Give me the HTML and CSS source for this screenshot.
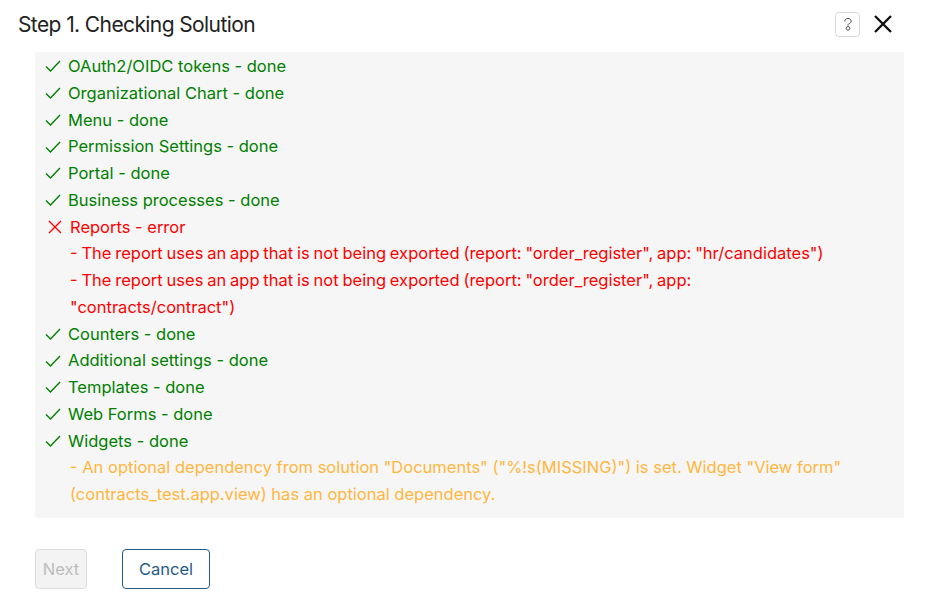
FILE: index.html
```html
<!DOCTYPE html>
<html>
<head>
<meta charset="utf-8">
<link rel="stylesheet" href="styles.css">
</head>
<body>
<div class="dialog">
  <div class="header">
    <h1 class="title">Step 1. Checking Solution</h1>
    <div class="actions">
      <span class="help">
        <svg width="10" height="15" viewBox="0 0 10 15"><path d="M1.8 4.4C1.8 2.5 3.2 1.4 5 1.4s3.2 1.1 3.2 2.8c0 1.5-1.1 2.1-2.1 2.5-0.9 0.3-1.1 0.9-1.1 1.6v0.5" fill="none" stroke="#555" stroke-width="1"/><circle cx="5" cy="11.4" r="1.8" fill="none" stroke="#555" stroke-width="1"/></svg>
      </span>
      <svg class="close" width="20" height="20" viewBox="0 0 20 20"><path d="M2 2L18 18M18 2L2 18" stroke="#111" stroke-width="2.4"/></svg>
    </div>
  </div>
  <div class="panel">
    <div class="row ok"><svg class="ico" width="16" height="14" viewBox="0 0 16 14"><path d="M1 7.5L5.5 12L15 2" fill="none" stroke="#008000" stroke-width="1.4"/></svg>OAuth2/OIDC tokens - done</div>
    <div class="row ok"><svg class="ico" width="16" height="14" viewBox="0 0 16 14"><path d="M1 7.5L5.5 12L15 2" fill="none" stroke="#008000" stroke-width="1.4"/></svg>Organizational Chart - done</div>
    <div class="row ok"><svg class="ico" width="16" height="14" viewBox="0 0 16 14"><path d="M1 7.5L5.5 12L15 2" fill="none" stroke="#008000" stroke-width="1.4"/></svg>Menu - done</div>
    <div class="row ok"><svg class="ico" width="16" height="14" viewBox="0 0 16 14"><path d="M1 7.5L5.5 12L15 2" fill="none" stroke="#008000" stroke-width="1.4"/></svg>Permission Settings - done</div>
    <div class="row ok"><svg class="ico" width="16" height="14" viewBox="0 0 16 14"><path d="M1 7.5L5.5 12L15 2" fill="none" stroke="#008000" stroke-width="1.4"/></svg>Portal - done</div>
    <div class="row ok"><svg class="ico" width="16" height="14" viewBox="0 0 16 14"><path d="M1 7.5L5.5 12L15 2" fill="none" stroke="#008000" stroke-width="1.4"/></svg>Business processes - done</div>
    <div class="row err"><svg class="ico ico-x" width="18" height="14" viewBox="0 0 18 14"><path d="M2 1L14 13M14 1L2 13" fill="none" stroke="#ff0000" stroke-width="1.4"/></svg>Reports - error</div>
    <div class="sub err">- The report uses an app that is not being exported (report: "order_register", app: "hr/candidates")</div>
    <div class="sub err">- The report uses an app that is not being exported (report: "order_register", app: "contracts/contract")</div>
    <div class="row ok"><svg class="ico" width="16" height="14" viewBox="0 0 16 14"><path d="M1 7.5L5.5 12L15 2" fill="none" stroke="#008000" stroke-width="1.4"/></svg>Counters - done</div>
    <div class="row ok"><svg class="ico" width="16" height="14" viewBox="0 0 16 14"><path d="M1 7.5L5.5 12L15 2" fill="none" stroke="#008000" stroke-width="1.4"/></svg>Additional settings - done</div>
    <div class="row ok"><svg class="ico" width="16" height="14" viewBox="0 0 16 14"><path d="M1 7.5L5.5 12L15 2" fill="none" stroke="#008000" stroke-width="1.4"/></svg>Templates - done</div>
    <div class="row ok"><svg class="ico" width="16" height="14" viewBox="0 0 16 14"><path d="M1 7.5L5.5 12L15 2" fill="none" stroke="#008000" stroke-width="1.4"/></svg>Web Forms - done</div>
    <div class="row ok"><svg class="ico" width="16" height="14" viewBox="0 0 16 14"><path d="M1 7.5L5.5 12L15 2" fill="none" stroke="#008000" stroke-width="1.4"/></svg>Widgets - done</div>
    <div class="sub warn">- An optional dependency from solution "Documents" ("%!s(MISSING)") is set. Widget "View form" (contracts_test.app.view) has an optional dependency.</div>
  </div>
  <div class="footer">
    <button class="btn btn-disabled" disabled>Next</button>
    <button class="btn btn-outline">Cancel</button>
  </div>
</div>
</body>
</html>
```

FILE: styles.css
```css
* { box-sizing: border-box; }
html, body { margin: 0; padding: 0; background: #fff; }
body { font-family: Inter, "Noto Sans", sans-serif; width: 925px; height: 593px; overflow: hidden; }
.dialog { padding: 0 21px 0 0; }
.header {
  display: flex;
  align-items: center;
  justify-content: space-between;
  height: 52px;
  padding: 0 11px 4px 18px;
}
.title {
  margin: 0;
  font-size: 21px;
  font-weight: 400;
  color: #222;
  letter-spacing: -0.6px;
}
.actions { display: flex; align-items: center; gap: 13px; }
.help {
  width: 25px; height: 25px;
  border: 1px solid #d8d8d8;
  border-radius: 4px;
  display: flex; align-items: center; justify-content: center;
}
.close { display: block; }
.panel {
  margin-left: 35px;
  background: #f6f6f6;
  padding: 1px 52px 10px 10px;
  font-size: 16.5px;
  line-height: 26.75px;
}
.row { display: flex; align-items: center; }
.ico { margin-right: 7px; flex: none; }
.ico-x { margin-left: 2px; margin-right: 5px; }
.sub { padding-left: 25px; }
.sub.err { word-spacing: -0.8px; }
.ok { color: #008000; }
.err { color: #ff0000; }
.warn { color: #ffb640; }
.footer {
  display: flex;
  gap: 35px;
  padding: 31px 0 0 35px;
}
.btn {
  font-family: Inter, "Noto Sans", sans-serif;
  font-size: 16.5px;
  height: 40px;
  border-radius: 4px;
  background: #fff;
  padding: 0;
}
.btn-disabled {
  width: 52px;
  background: #f3f3f3;
  border: 1px solid #dcdcdc;
  color: #bdbdbd;
}
.btn-outline {
  width: 88px;
  border: 1px solid #1f5b86;
  color: #1f5b86;
}
```
